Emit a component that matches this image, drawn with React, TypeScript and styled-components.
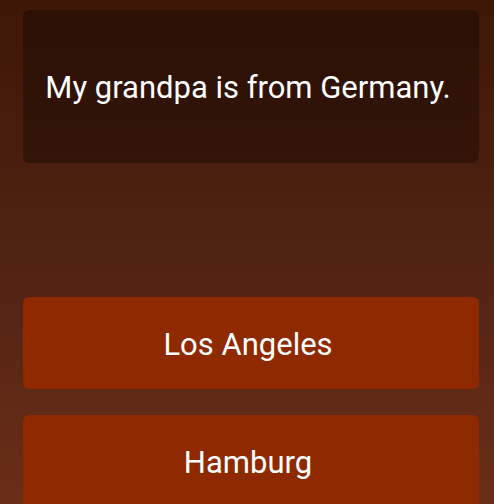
import React from "react";
import styled, { createGlobalStyle } from "styled-components";

const Global = createGlobalStyle`
  html, body { margin: 0; padding: 0; height: 100%; }
  body {
    background: linear-gradient(180deg, #3e1707 0%, #552514 60%, #6a2e17 100%);
    font-family: Roboto, "Noto Sans", sans-serif;
    overflow: hidden;
  }
  #root { min-height: 504px; }
`;

const Page = styled.div`
  display: flex;
  flex-direction: column;
  padding: 10px 15px 0 23px;
  height: 504px;
  box-sizing: border-box;
`;

const Prompt = styled.div`
  height: 153px;
  box-sizing: border-box;
  padding: 2px 6px 0 0;
  border-radius: 6px;
  background: rgba(0, 0, 0, 0.3);
  display: flex;
  align-items: center;
  justify-content: center;
  color: #ffffff;
  font-size: 31px;
  flex-shrink: 0;
`;

const Answers = styled.div`
  display: flex;
  flex-direction: column;
  gap: 26px;
  margin-top: 134px;
`;

const Answer = styled.button`
  height: 92px;
  box-sizing: border-box;
  border: none;
  border-radius: 6px;
  background: #8f2900;
  color: #ffffff;
  font-family: Roboto, "Noto Sans", sans-serif;
  font-size: 31px;
  display: flex;
  align-items: center;
  justify-content: center;
  flex-shrink: 0;
  padding: 2px 6px 0 0;
`;

export default function App() {
  return (
    <>
      <Global />
      <Page>
        <Prompt>My grandpa is from Germany.</Prompt>
        <Answers>
          <Answer>Los Angeles</Answer>
          <Answer>Hamburg</Answer>
        </Answers>
      </Page>
    </>
  );
}
